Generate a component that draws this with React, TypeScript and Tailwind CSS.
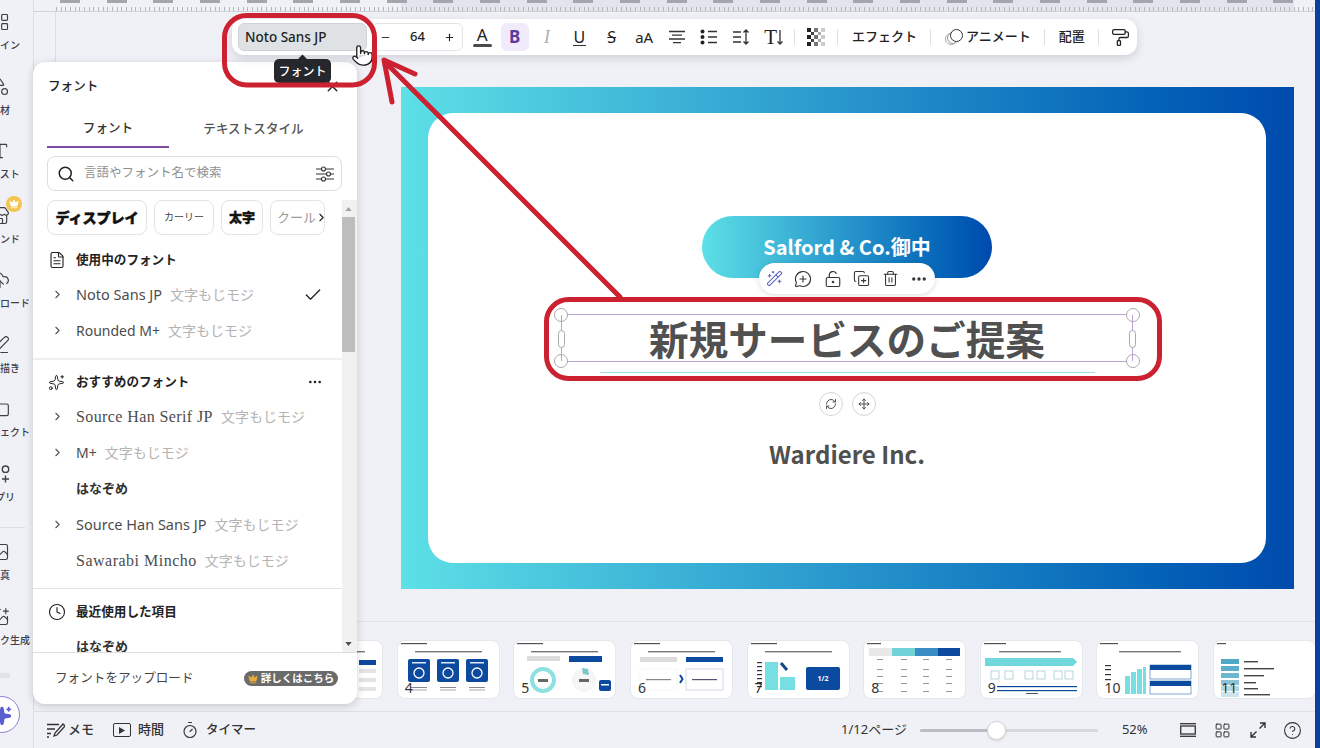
import React from "react";
import {
  Search, ChevronRight, Check, X, FileText, Sparkles, Clock, Ellipsis, WandSparkles, MessageCirclePlus, LockKeyholeOpen,
  CopyPlus, Trash2, RefreshCw, Move, PaintRoller, Pointer, Timer, LayoutGrid, CircleHelp, Crown, Shapes, Type, Store,
  CloudUpload, PenLine, Folder, Image, ImagePlus, LayoutPanelLeft, Minus, Plus,
} from "lucide-react";

const serif = "[font-family:'Liberation_Serif','Noto_Sans_CJK_JP',serif]";

function SideItem({ icon, label, badge }: { icon: React.ReactNode; label: string; badge?: boolean }) {
  return (
    <div className="relative flex h-[64.5px] w-[66px] flex-none flex-col items-center justify-start gap-[6px] pt-[1px] text-[#3d4046]">
      {badge && (
        <span className="absolute left-[39px] top-[-9px] flex h-[16px] w-[16px] items-center justify-center rounded-full bg-[#f4c44e]">
          <Crown size={10} fill="#fff" stroke="#fff" />
        </span>
      )}
      {icon}
      <span className="whitespace-nowrap text-[10px] font-medium leading-[14px]">{label}</span>
    </div>
  );
}

function FontRow({ name, sample, arrow = true, check, cls = "text-[14px]" }: { name: string; sample?: string; arrow?: boolean; check?: boolean; cls?: string }) {
  return (
    <div className="flex h-[36px] items-center pb-[1px] pl-[18px] pr-[19px]">
      <span className="flex w-[25px] flex-none items-center">{arrow && <ChevronRight size={13} className="text-[#555]" />}</span>
      <span className={`whitespace-nowrap text-[#4c4c4c] ${cls}`}>{name}</span>
      {sample && <span className="ml-[8px] whitespace-nowrap text-[14px] text-[#b4b4b4]">{sample}</span>}
      {check && <Check size={20} strokeWidth={1.6} className="ml-auto text-[#222]" />}
    </div>
  );
}

function SectionHead({ icon, label, more }: { icon: React.ReactNode; label: string; more?: boolean }) {
  return (
    <div className="flex h-[34px] items-center pl-[15px] pr-[19px]">
      <span className="flex w-[28px] flex-none items-center text-[#222]">{icon}</span>
      <span className="text-[12.6px] font-bold text-[#222]">{label}</span>
      {more && <Ellipsis size={16} className="ml-auto text-[#222]" />}
    </div>
  );
}

function ToolIcon({ children, cls = "" }: { children: React.ReactNode; cls?: string }) {
  return <span className={`flex h-[28px] w-[32.4px] flex-none items-center justify-center ${cls}`}>{children}</span>;
}

const Sep = ({ cls = "" }: { cls?: string }) => <span className={`h-[16px] w-px flex-none bg-[#dcdde0] ${cls}`} />;

function Thumb({ n, children }: { n?: number; children: React.ReactNode }) {
  return (
    <div className="relative h-[57px] w-[101px] flex-none overflow-hidden rounded-[7px] bg-white shadow-[0_0_0_1px_#e6e7ec]">
      <svg viewBox="0 0 101 57" className="block h-full w-full">{children}</svg>
      {n && <span className="absolute bottom-[3px] left-[7px] text-[14px] leading-none text-[#333]">{n}</span>}
    </div>
  );
}

const Head = ({ sub = true }: { sub?: boolean }) => (
  <>
    <rect x="3" y="2" width="26" height="1.2" fill="#555" />
    {sub && <rect x="17" y="10" width="67" height="1.4" fill="#777" />}
  </>
);

function Thumbs() {
  return (
    <div className="flex h-[89px] flex-none gap-[15.65px] overflow-hidden pl-[247px] pt-[19px]">
      <Thumb>
        <Head />
        <rect x="78" y="19" width="17" height="5" fill="#0b4a9e" />
        {[28, 37, 46].map((y) => <rect key={y} x="78" y={y} width="17" height="4" fill="#e4e4e4" />)}
      </Thumb>
      <Thumb n={4}>
        <Head />
        {[10, 39, 68].map((x) => (
          <g key={x}>
            <rect x={x} y="18" width="22" height="23" rx="2" fill="#0b4a9e" />
            <rect x={x + 4} y="21" width="14" height="1.5" fill="#dfe9f5" />
            <circle cx={x + 11} cy="32" r="5" fill="none" stroke="#fff" strokeWidth="1.3" />
            <rect x={x + 3} y="46" width="16" height="1" fill="#888" />
            <rect x={x + 3} y="48.5" width="16" height="1" fill="#aaa" />
          </g>
        ))}
      </Thumb>
      <Thumb n={5}>
        <Head />
        <rect x="13" y="15" width="33" height="5" fill="#dcdcdc" />
        <rect x="55" y="15" width="33" height="6" fill="#0b4a9e" />
        <circle cx="29" cy="39" r="11" fill="none" stroke="#8fe0e2" strokeWidth="4" />
        <rect x="24" y="38" width="10" height="3" fill="#666" />
        <circle cx="70" cy="39" r="12" fill="#f6f6f6" />
        <rect x="65" y="38" width="10" height="3" fill="#666" />
        <path d="M68 27l6 1 1 6-6-1z" fill="#7cc5c9" />
        <rect x="85" y="39" width="12" height="11" rx="2" fill="#0b4a9e" />
        <rect x="87" y="43" width="8" height="1.5" fill="#fff" />
      </Thumb>
      <Thumb n={6}>
        <Head />
        <rect x="9" y="16" width="37" height="5" fill="#dcdcdc" />
        <rect x="55" y="16" width="37" height="5" fill="#0b4a9e" />
        <rect x="9" y="28" width="37" height="21" fill="#fff" stroke="#eee" strokeWidth=".5" />
        <rect x="55" y="28" width="37" height="21" fill="#fff" stroke="#b5c0cc" strokeWidth=".6" />
        <rect x="15" y="38" width="25" height="1.2" fill="#888" />
        <rect x="61" y="38" width="25" height="1.2" fill="#557" />
        <path d="M49 34l2.5 4-2.5 4" fill="none" stroke="#0b4a9e" strokeWidth="2" />
      </Thumb>
      <Thumb n={7}>
        <Head />
        {[21, 25, 29, 33, 37, 41, 45].map((y) => <rect key={y} x="9" y={y} width="5" height="1.2" fill="#333" />)}
        <rect x="17" y="21" width="13" height="28" fill="#76dfe2" />
        <rect x="32" y="36" width="15" height="13" fill="#76dfe2" />
        <path d="M33 22l6 7" stroke="#124b87" strokeWidth="3" />
        <rect x="58" y="26" width="34" height="23" rx="2" fill="#0b4a9e" />
        <text x="75" y="40" textAnchor="middle" fontSize="7" fontWeight="700" fill="#fff">1/2</text>
      </Thumb>
      <Thumb n={8}>
        <rect x="3" y="2" width="14" height="1.2" fill="#555" />
        <rect x="5" y="7" width="23" height="8" fill="#e8e8e8" />
        <rect x="28" y="7" width="23" height="8" fill="#6fd3d8" />
        <rect x="51" y="7" width="23" height="8" fill="#3a8cc4" />
        <rect x="74" y="7" width="22" height="8" fill="#0b4a9e" />
        {[18, 28, 35, 42, 50].map((y) => [16, 40, 62, 85].map((x) => <rect key={`${x}${y}`} x={x - 3} y={y} width="6" height="1" fill="#999" />))}
      </Thumb>
      <Thumb n={9}>
        <rect x="3" y="2" width="22" height="1.2" fill="#555" />
        <rect x="18" y="10" width="62" height="1.4" fill="#777" />
        <path d="M4 17h88l4 4-4 4H4z" fill="#6fd8dc" />
        {[10, 24, 44, 56, 73, 84].map((x) => <rect key={x} x={x} y="30" width="8" height="8" fill="none" stroke="#9fc3c9" strokeWidth=".7" />)}
        <rect x="16" y="45" width="80" height="1.2" fill="#0b4a9e" />
        <rect x="16" y="49" width="80" height="1.2" fill="#0b4a9e" />
        <rect x="45" y="52" width="12" height="1" fill="#555" />
      </Thumb>
      <Thumb n={10}>
        <rect x="3" y="2" width="18" height="1.2" fill="#555" />
        <rect x="22" y="10" width="62" height="1.4" fill="#777" />
        {[24, 28, 33, 38].map((y) => <rect key={y} x="8" y={y} width="6" height="1.2" fill="#333" />)}
        <rect x="28" y="35" width="5" height="18" fill="#76dfe2" />
        <rect x="34" y="31" width="5" height="22" fill="#76dfe2" />
        <rect x="40" y="28" width="5" height="25" fill="#76dfe2" />
        <rect x="46" y="26" width="3" height="27" fill="#76dfe2" />
        <rect x="53" y="24" width="41" height="14" fill="#fff" stroke="#0b4a9e" strokeWidth=".5" />
        <rect x="53" y="24" width="41" height="5" fill="#0b4a9e" />
        <rect x="53" y="40" width="41" height="13" fill="#fff" stroke="#0b4a9e" strokeWidth=".5" />
        <rect x="53" y="40" width="41" height="5" fill="#0b4a9e" />
      </Thumb>
      <Thumb n={11}>
        <rect x="3" y="2" width="9" height="1.2" fill="#555" />
        {[20, 27, 34, 41, 47, 53].map((y, i) => (
          <g key={y}>
            <rect x="7" y={y - 2} width="18" height="5" fill={["#4fa8c4", "#5aaecb", "#6db7cf", "#8bc4d8", "#b1d7e3", "#cce4ec"][i]} />
            <rect x="30" y={y} width={[14, 30, 20, 12, 14, 26][i]} height="1.4" fill="#444" />
          </g>
        ))}
      </Thumb>
    </div>
  );
}

function Panel() {
  return (
    <div className="absolute left-[33px] top-[62px] z-10 flex h-[642px] w-[324px] flex-col overflow-hidden rounded-xl bg-white shadow-[0_2px_8px_rgba(0,0,0,0.18)]">
      <div className="flex h-[48px] flex-none items-center justify-between pl-[15px] pr-[16px]">
        <span className="text-[12.6px] font-medium text-[#222]">フォント</span>
        <X size={17} className="text-[#222]" />
      </div>
      <div className="mx-[14px] flex h-[38px] flex-none text-[12.6px] font-medium">
        <div className="flex w-[122px] items-center justify-center border-b-2 border-[#7d4a9e] text-[#333]">フォント</div>
        <div className="flex flex-1 items-center justify-center pr-[5px] text-[#555]">テキストスタイル</div>
      </div>
      <div className="mx-[14px] mt-[8px] flex h-[35px] w-[295px] flex-none items-center rounded-lg border border-[#dcdde0] pl-[9px] pr-[7px]">
        <Search size={18} className="text-[#222]" />
        <span className="ml-[9px] text-[12.5px] text-[#8f8f8f]">言語やフォント名で検索</span>
        <svg viewBox="0 0 18 18" className="ml-auto h-[18px] w-[18px]" fill="none" stroke="#333" strokeWidth="1.1">
          <path d="M0 4h5M10 4h8M0 9h10M15 9h3M0 14h5M10 14h8" />
          <circle cx="7.5" cy="4" r="2" /><circle cx="12.5" cy="9" r="2" /><circle cx="7.5" cy="14" r="2" />
        </svg>
      </div>
      <div className="mt-[9px] flex min-h-0 flex-1">
        <div className="w-[309px] flex-none overflow-hidden">
          <div className="flex h-[35px] gap-[7px] pl-[14px]">
            <span className="flex w-[100px] flex-none items-center justify-center rounded-lg border border-[#e2e3e6] text-[14px] font-black text-[#111] [-webkit-text-stroke:0.5px_#111]">ディスプレイ</span>
            <span className="flex w-[60px] flex-none items-center justify-center rounded-lg border border-[#e2e3e6] text-[10px] text-[#444]">カーリー</span>
            <span className="flex w-[42px] flex-none items-center justify-center rounded-lg border border-[#e2e3e6] text-[13px] font-black text-[#111] [-webkit-text-stroke:0.4px_#111]">太字</span>
            <span className="flex w-[55px] flex-none items-center overflow-hidden whitespace-nowrap rounded-lg border border-[#e2e3e6] pl-[6px] text-[13px] text-[#999]">クール<ChevronRight size={13} className="-ml-[1px] flex-none text-[#222]" /></span>
          </div>
          <div className="mt-[8px]">
            <SectionHead icon={<FileText size={18} strokeWidth={1.5} />} label="使用中のフォント" />
            <FontRow name="Noto Sans JP" sample="文字もじモジ" cls="text-[14.5px]" check />
            <FontRow name="Rounded M+" sample="文字もじモジ" />
          </div>
          <div className="mt-[9px] h-[2px] bg-[#efefef]" />
          <div className="mt-[5px]">
            <SectionHead icon={<Sparkles size={17} strokeWidth={1.4} />} label="おすすめのフォント" more />
            <FontRow name="Source Han Serif JP" sample="文字もじモジ" cls={`${serif} text-[16px] tracking-[0.4px]`} />
            <FontRow name="M+" sample="文字もじモジ" />
            <FontRow name="はなぞめ" arrow={false} cls="text-[13px] font-bold !text-[#333]" />
            <FontRow name="Source Han Sans JP" sample="文字もじモジ" cls="text-[14.5px]" />
            <FontRow name="Sawarabi Mincho" sample="文字もじモジ" arrow={false} cls={`${serif} text-[16px] tracking-[0.5px]`} />
          </div>
          <div className="mt-[9px] h-px bg-[#e4e4e4]" />
          <div className="mt-[6px]">
            <SectionHead icon={<Clock size={18} strokeWidth={1.5} />} label="最近使用した項目" />
            <FontRow name="はなぞめ" arrow={false} cls="text-[13px] font-bold !text-[#333]" />
          </div>
        </div>
        <div className="flex w-[15px] flex-none flex-col items-center bg-[#f1f1f1] pr-[2px]">
          <svg viewBox="0 0 8 5" className="mt-[7px] h-[4px] w-[7px]"><path d="M4 0l4 5H0z" fill="#a3a3a3" /></svg>
          <div className="mt-[6px] h-[135px] w-[13px] bg-[#bdbdbd]" />
          <svg viewBox="0 0 8 5" className="mb-[6px] mt-auto h-[4px] w-[7px]"><path d="M0 0h8L4 5z" fill="#505050" /></svg>
        </div>
      </div>
      <div className="flex h-[52px] flex-none items-center justify-between border-t border-[#dedede] pl-[22px] pr-[19px]">
        <span className="text-[12.6px] text-[#444]">フォントをアップロード</span>
        <span className="flex h-[15px] w-[94px] items-center justify-center gap-[3px] rounded-full bg-[#6a6a6a] text-[10.5px] font-bold leading-none text-white">
          <Crown size={10} fill="#e8ae3c" stroke="#e8ae3c" />詳しくはこちら
        </span>
      </div>
    </div>
  );
}

const checker = [
  "bg-[#222]", "bg-white", "bg-[#777]", "bg-white", "bg-[#ccc]",
  "bg-white", "bg-[#444]", "bg-white", "bg-[#aaa]", "bg-white",
  "bg-[#222]", "bg-white", "bg-[#777]", "bg-white", "bg-[#ccc]",
  "bg-white", "bg-[#444]", "bg-white", "bg-[#aaa]", "bg-white",
  "bg-[#222]", "bg-white", "bg-[#777]", "bg-white", "bg-[#ccc]",
];

function Toolbar() {
  return (
    <div className="absolute left-[232px] top-[19px] z-20 flex h-[36px] w-[905px] items-center rounded-xl bg-white pl-[6px] text-[#222] shadow-[0_3px_10px_rgba(30,40,70,0.16)]">
      <div className="flex h-[28px] w-[129px] flex-none items-center rounded-md border border-[#cfd2d6] bg-[#dfe2e5] pl-[6px] text-[13.5px] font-medium text-[#222]">Noto Sans JP</div>
      <div className="ml-[5px] flex h-[28px] w-[91px] flex-none items-center justify-between rounded-md border border-[#e3e4e7] px-[7px] text-[13px] font-medium">
        <Minus size={11} strokeWidth={2} />
        <span>64</span>
        <Plus size={11} strokeWidth={2.4} />
      </div>
      <span className="ml-[3px] flex">
        <ToolIcon>
          <span className="flex flex-col items-center leading-none">
            <span className="text-[17px] leading-[15px]">A</span>
            <span className="mt-[2px] h-[3px] w-[19px] rounded-sm bg-[#4b4b4b]" />
          </span>
        </ToolIcon>
        <ToolIcon><span className="flex h-[28px] w-[28px] items-center justify-center rounded-md bg-[#f0eafa] text-[17px] font-bold text-[#5b3a9c]">B</span></ToolIcon>
        <ToolIcon><span className={`${serif} text-[19px] italic text-[#b3b3b3]`}>I</span></ToolIcon>
        <ToolIcon><span className="border-b-[1.5px] border-[#333] px-[1px] text-[16px] leading-[16px]">U</span></ToolIcon>
        <ToolIcon><span className="text-[16px] line-through">S</span></ToolIcon>
        <ToolIcon><span className="text-[15px]">aA</span></ToolIcon>
        <ToolIcon>
          <svg viewBox="0 0 18 14" className="h-[14px] w-[18px]" stroke="#333" strokeWidth="1.3"><path d="M1 1.5h16M4 5.2h10M1 9h16M5 12.7h8" /></svg>
        </ToolIcon>
        <ToolIcon>
          <svg viewBox="0 0 18 16" className="h-[16px] w-[18px]" stroke="#333" strokeWidth="1.3" fill="#222"><circle cx="2.5" cy="2.5" r="2" stroke="none" /><circle cx="2.5" cy="8" r="2" stroke="none" /><circle cx="2.5" cy="13.5" r="2" stroke="none" /><path d="M8 2.5h9M8 8h9M8 13.5h9" /></svg>
        </ToolIcon>
        <ToolIcon>
          <svg viewBox="0 0 18 16" className="h-[16px] w-[18px]" stroke="#333" strokeWidth="1.3" fill="none"><path d="M1 3h8M1 8h8M1 13h8M14 1v14M11.5 3.5L14 1l2.5 2.5M11.5 12.5L14 15l2.5-2.5" /></svg>
        </ToolIcon>
        <ToolIcon>
          <span className="flex items-center">
            <span className={`${serif} text-[21px] leading-none`}>T</span>
            <svg viewBox="0 0 6 15" className="h-[15px] w-[6px]" stroke="#333" strokeWidth="1.3" fill="none"><path d="M3 0v14M.5 11.5L3 14l2.5-2.5" /></svg>
          </span>
        </ToolIcon>
      </span>
      <Sep cls="ml-[4px]" />
      <span className="ml-[12px] grid h-[18px] w-[18px] flex-none grid-cols-5 grid-rows-5">
        {checker.map((c, i) => <span key={i} className={c} />)}
      </span>
      <Sep cls="ml-[12px]" />
      <span className="ml-[14px] text-[13px] font-medium">エフェクト</span>
      <Sep cls="ml-[13px]" />
      <span className="relative ml-[14px] h-[16px] w-[18px] flex-none">
        <span className="absolute bottom-0 left-0 h-[12px] w-[12px] rounded-full border border-[#aaa]" />
        <span className="absolute bottom-[1px] left-[2px] h-[12px] w-[12px] rounded-full border border-[#999] bg-white" />
        <span className="absolute right-0 top-0 h-[13px] w-[13px] rounded-full border-[1.5px] border-[#333] bg-white" />
      </span>
      <span className="ml-[3px] text-[13px] font-medium">アニメート</span>
      <Sep cls="ml-[13px]" />
      <span className="ml-[14px] text-[13px] font-medium">配置</span>
      <Sep cls="ml-[13px]" />
      <PaintRoller size={19} strokeWidth={1.6} className="ml-[12px]" />
    </div>
  );
}

function Handle({ cls }: { cls: string }) {
  return <span className={`absolute h-[14px] w-[14px] rounded-full border border-[#aaa] bg-white ${cls}`} />;
}

function Slide() {
  return (
    <div className="ml-[345px] mt-[75px] h-[502px] w-[893px] flex-none bg-linear-to-r from-[#5de0e6] to-[#004aad] pb-[26px] pl-[27px] pr-[28px] pt-[26px] [font-family:'Noto_Sans_CJK_JP',sans-serif]">
      <div className="relative flex h-[450px] flex-col items-center rounded-[25px] bg-white text-[#505050]">
        <div className="mt-[103px] flex h-[62px] w-[290px] flex-none items-center justify-center rounded-full bg-linear-to-r from-[#5de0e6] to-[#004aad] text-[20px] font-bold text-white">Salford &amp; Co.御中</div>
        <div className="relative mt-[36px] flex h-[48px] w-[572px] flex-none items-center justify-center border-y border-[#b9a2d8]">
          <span className="text-[39.6px] font-bold leading-none">新規サービスのご提案</span>
          <Handle cls="-left-[7px] -top-[7px]" />
          <Handle cls="-right-[7px] -top-[7px]" />
          <Handle cls="-left-[7px] -bottom-[7px]" />
          <Handle cls="-right-[7px] -bottom-[7px]" />
          <span className="absolute inset-y-0 left-0 w-px bg-[#b9a2d8]" />
          <span className="absolute inset-y-0 right-0 w-px bg-[#b9a2d8]" />
          <span className="absolute -left-[3px] top-[15px] h-[18px] w-[7px] rounded-full border border-[#aaa] bg-white" />
          <span className="absolute -right-[3px] top-[15px] h-[18px] w-[7px] rounded-full border border-[#aaa] bg-white" />
          <div className="absolute -top-[52px] left-[198px] flex h-[31px] w-[176px] items-center justify-between rounded-full bg-white px-[7px] text-[#333] shadow-[0_1px_5px_rgba(0,0,0,0.15)]">
            <WandSparkles size={17} strokeWidth={1.5} className="text-[#5d62c4]" />
            <MessageCirclePlus size={18} strokeWidth={1.5} />
            <LockKeyholeOpen size={18} strokeWidth={1.5} />
            <CopyPlus size={17} strokeWidth={1.5} />
            <Trash2 size={17} strokeWidth={1.5} />
            <Ellipsis size={18} strokeWidth={2.4} />
          </div>
          <div className="absolute left-[258px] top-[77px] flex gap-[9px]">
            <span className="flex h-[24px] w-[24px] items-center justify-center rounded-full border border-[#d6d6d6] bg-white"><RefreshCw size={12} /></span>
            <span className="flex h-[24px] w-[24px] items-center justify-center rounded-full border border-[#d6d6d6] bg-white"><Move size={12} /></span>
          </div>
        </div>
        <div className="mt-[10px] h-px w-[495px] flex-none bg-[#9bdde3]" />
        <div className="mt-[66px] text-[24px] font-bold leading-[30px]">Wardiere Inc.</div>
      </div>
    </div>
  );
}

function BottomBar() {
  return (
    <div className="flex h-[37px] flex-none items-center border-t border-[#dfe0e5] pl-[13px] text-[13px] font-medium text-[#333]">
      <svg viewBox="0 0 18 16" className="h-[16px] w-[18px] flex-none" fill="none" stroke="#333" strokeWidth="1.3"><path d="M0 2.5h12M0 7h8M0 11.5h4M0 15h2M7 14l1-3 8-9 2 2-8 9z" /></svg>
      <span className="ml-[3px]">メモ</span>
      <span className="ml-[19px] flex h-[14px] w-[18px] flex-none items-center justify-center rounded-[2px] border-[1.3px] border-[#333]">
        <svg viewBox="0 0 6 7" className="h-[7px] w-[6px]"><path d="M0 0l6 3.5L0 7z" fill="#333" /></svg>
      </span>
      <span className="ml-[7px]">時間</span>
      <Timer size={18} strokeWidth={1.5} className="ml-[17px] flex-none" />
      <span className="ml-[7px] text-[12.5px]">タイマー</span>
      <span className="ml-[585px] font-normal">1/12ページ</span>
      <div className="relative ml-[13px] flex h-[3px] w-[178px] flex-none rounded-full bg-[#d6d7dc]">
        <span className="h-[3px] w-[76px] rounded-full bg-[#bcbdc2]" />
        <span className="absolute left-[67px] top-[-8px] h-[19px] w-[19px] rounded-full border border-[#d6d6da] bg-white shadow-sm" />
      </div>
      <span className="ml-[24px] w-[26px] font-normal">52%</span>
      <svg viewBox="0 0 16 14" className="ml-[32px] h-[14px] w-[16px] flex-none" fill="none" stroke="#333" strokeWidth="1.3"><path d="M0 .7h16" /><rect x=".7" y="3" width="14.6" height="8" /><path d="M0 13.3h16" /></svg>
      <LayoutGrid size={17} strokeWidth={1.4} className="ml-[18px] flex-none" />
      <svg viewBox="0 0 16 16" className="ml-[19px] h-[16px] w-[16px] flex-none" fill="none" stroke="#333" strokeWidth="1.4"><path d="M10 1h5v5M15 1L9.5 6.5M6 15H1v-5M1 15l5.5-5.5" /></svg>
      <CircleHelp size={19} strokeWidth={1.4} className="ml-[17px] flex-none" />
    </div>
  );
}

function AppsIcon() {
  return (
    <svg viewBox="0 0 20 20" className="h-[20px] w-[20px]" fill="none" stroke="currentColor" strokeWidth="1.4">
      <rect x="1.5" y="2" width="6.5" height="6.5" rx="1" />
      <circle cx="15.5" cy="5.2" r="3.2" />
      <rect x="1.5" y="12" width="6.5" height="6.5" rx="1" />
      <path d="M15.5 11.5v7M12 15h7" />
    </svg>
  );
}

export default function App() {
  return (
    <div className="relative flex h-[748px] w-[1320px] overflow-hidden bg-[#f0f1f6] [font-family:'Noto_Sans','Noto_Sans_CJK_JP',sans-serif]">
      <aside className="relative z-0 flex w-[33px] flex-none flex-col overflow-hidden pt-[11px]">
        <div className="-ml-[33px]">
          <SideItem label="デザイン" icon={<LayoutPanelLeft size={20} strokeWidth={1.4} />} />
          <SideItem label="素材" icon={<Shapes size={20} strokeWidth={1.4} />} />
          <SideItem label="テキスト" icon={<Type size={20} strokeWidth={1.4} />} />
          <SideItem label="ブランド" icon={<Store size={20} strokeWidth={1.4} />} badge />
          <SideItem label="アップロード" icon={<CloudUpload size={20} strokeWidth={1.4} />} />
          <SideItem label="お絵描き" icon={<PenLine size={20} strokeWidth={1.4} />} />
          <SideItem label="プロジェクト" icon={<Folder size={20} strokeWidth={1.4} />} />
          <SideItem label="アプリ" icon={<AppsIcon />} />
          <div className="mb-[13px] ml-[33px] h-px w-[25px] bg-[#dcdde2]" />
          <SideItem label="写真" icon={<Image size={20} strokeWidth={1.4} />} />
          <SideItem label="マジック生成" icon={<ImagePlus size={20} strokeWidth={1.4} />} />
        </div>
      </aside>
      <span className="absolute left-[0px] top-[673px] z-0 h-[5px] w-[10px] bg-[#e2e3e7]" />
      <div className="absolute -left-[17px] top-[696px] z-20 flex h-[37px] w-[37px] items-center justify-center rounded-full border border-[#8a7fd6] bg-white">
        <Sparkles size={20} fill="#5a5fd0" stroke="#5a5fd0" className="mt-[2px]" />
      </div>

      <main className="flex min-w-0 flex-1 flex-col border-l border-[#dcdde3]">
        <div className="h-[12px] flex-none border-b border-[#cfd1d8] pl-[22px]">
          <div className="h-full bg-[linear-gradient(90deg,transparent_345px,#e3e5ed_345px,#e3e5ed_1238px,transparent_1238px)]">
            <div className="h-[3px] bg-[repeating-linear-gradient(90deg,transparent_0,transparent_4px,#a4a6ae_4px,#a4a6ae_24px,transparent_24px,transparent_46.67px)]" />
            <div className="mt-[4px] h-[4px] bg-[repeating-linear-gradient(90deg,#b4b6bd_0,#b4b6bd_1px,transparent_1px,transparent_4.67px)]" />
          </div>
        </div>
        <div className="flex min-h-0 flex-1">
          <div className="h-full w-[22px] flex-none border-r border-[#dcdde3]" />
          <Slide />
        </div>
        <div className="flex-none border-t border-[#dfe0e5]"><Thumbs /></div>
        <BottomBar />
      </main>
      <div className="w-[5px] flex-none bg-[#0b3fa2]" />

      <Toolbar />
      <Panel />

      <div className="absolute left-[274px] top-[59px] z-30 flex h-[24px] w-[57px] items-center justify-center rounded-[5px] bg-[#25272c] pt-[2px] text-[12px] font-medium text-white">
        <span className="absolute -top-[3px] left-[25px] h-[7px] w-[7px] rotate-45 bg-[#25272c]" />
        フォント
      </div>
      <Pointer size={23} strokeWidth={1.4} fill="#fff" className="absolute left-[351px] top-[44px] z-30 text-[#222]" />

      <svg viewBox="0 0 1320 748" className="pointer-events-none absolute inset-0 z-40 h-[748px] w-[1320px]" fill="none" stroke="#cb2130" strokeWidth="5" strokeLinecap="round" strokeLinejoin="round">
        <rect x="224.5" y="15.5" width="150" height="69.5" rx="22" />
        <rect x="546.5" y="299.5" width="613" height="79" rx="22" />
        <path d="M620 297L385 62" />
        <path d="M415 74L384 60L392 102" />
      </svg>
    </div>
  );
}
